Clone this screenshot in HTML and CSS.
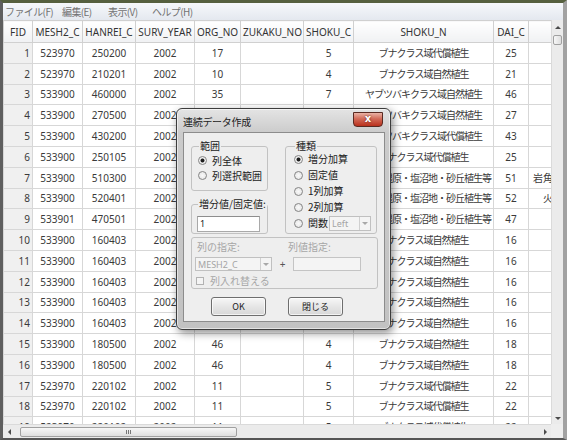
FILE: index.html
```html
<!DOCTYPE html>
<html lang="ja">
<head>
    <meta charset="UTF-8">
    <title>属性テーブル - 連続データ作成</title>
    <link rel="stylesheet" href="styles.css">
</head>
<body>
    <div class="window">
        <div class="menubar">
            <span class="menu m-file">ファイル(F)</span>
            <span class="menu m-edit">編集(E)</span>
            <span class="menu m-view">表示(V)</span>
            <span class="menu">ヘルプ(H)</span>
        </div>

        <div class="view">
            <div class="sheet">
                <table class="grid">
                    <colgroup>
                        <col class="w-fid">
                        <col class="w-mesh">
                        <col class="w-hanrei">
                        <col class="w-year">
                        <col class="w-org">
                        <col class="w-zukaku">
                        <col class="w-shokuc">
                        <col class="w-shokun">
                        <col class="w-dai">
                        <col class="w-more">
                    </colgroup>
                    <thead>
                    <tr>
                        <th>FID</th><th>MESH2_C</th><th>HANREI_C</th><th>SURV_YEAR</th><th>ORG_NO</th>
                        <th>ZUKAKU_NO</th><th>SHOKU_C</th><th>SHOKU_N</th><th>DAI_C</th><th></th>
                    </tr>
                    </thead>
                    <tbody>
                    <tr><td class="fid">1</td><td>523970</td><td>250200</td><td>2002</td><td>17</td><td></td><td>5</td><td>ブナクラス域代償植生</td><td>25</td><td></td></tr>
                    <tr><td class="fid">2</td><td>523970</td><td>210201</td><td>2002</td><td>10</td><td></td><td>4</td><td>ブナクラス域自然植生</td><td>21</td><td></td></tr>
                    <tr><td class="fid">3</td><td>533900</td><td>460000</td><td>2002</td><td>35</td><td></td><td>7</td><td>ヤブツバキクラス域自然植生</td><td>46</td><td></td></tr>
                    <tr><td class="fid">4</td><td>533900</td><td>270500</td><td>2002</td><td>35</td><td></td><td>7</td><td>ヤブツバキクラス域自然植生</td><td>27</td><td></td></tr>
                    <tr><td class="fid">5</td><td>533900</td><td>430200</td><td>2002</td><td>35</td><td></td><td>8</td><td>ヤブツバキクラス域代償植生</td><td>43</td><td></td></tr>
                    <tr><td class="fid">6</td><td>533900</td><td>250105</td><td>2002</td><td>35</td><td></td><td>5</td><td>ブナクラス域代償植生</td><td>25</td><td></td></tr>
                    <tr><td class="fid">7</td><td>533900</td><td>510300</td><td>2002</td><td>36</td><td></td><td>10</td><td>河辺・湿原・塩沼地・砂丘植生等</td><td>51</td><td class="ext-a">岩角地植生</td></tr>
                    <tr><td class="fid">8</td><td>533900</td><td>520401</td><td>2002</td><td>36</td><td></td><td>10</td><td>河辺・湿原・塩沼地・砂丘植生等</td><td>52</td><td class="ext-b">火山荒原植生</td></tr>
                    <tr><td class="fid">9</td><td>533901</td><td>470501</td><td>2002</td><td>36</td><td></td><td>10</td><td>河辺・湿原・塩沼地・砂丘植生等</td><td>47</td><td></td></tr>
                    <tr><td class="fid">10</td><td>533900</td><td>160403</td><td>2002</td><td>46</td><td></td><td>4</td><td>ブナクラス域自然植生</td><td>16</td><td></td></tr>
                    <tr><td class="fid">11</td><td>533900</td><td>160403</td><td>2002</td><td>46</td><td></td><td>4</td><td>ブナクラス域自然植生</td><td>16</td><td></td></tr>
                    <tr><td class="fid">12</td><td>533900</td><td>160403</td><td>2002</td><td>46</td><td></td><td>4</td><td>ブナクラス域自然植生</td><td>16</td><td></td></tr>
                    <tr><td class="fid">13</td><td>533900</td><td>160403</td><td>2002</td><td>46</td><td></td><td>4</td><td>ブナクラス域自然植生</td><td>16</td><td></td></tr>
                    <tr><td class="fid">14</td><td>533900</td><td>160403</td><td>2002</td><td>46</td><td></td><td>4</td><td>ブナクラス域自然植生</td><td>16</td><td></td></tr>
                    <tr><td class="fid">15</td><td>533900</td><td>180500</td><td>2002</td><td>46</td><td></td><td>4</td><td>ブナクラス域自然植生</td><td>18</td><td></td></tr>
                    <tr><td class="fid">16</td><td>533900</td><td>180500</td><td>2002</td><td>46</td><td></td><td>4</td><td>ブナクラス域自然植生</td><td>18</td><td></td></tr>
                    <tr><td class="fid">17</td><td>523970</td><td>220102</td><td>2002</td><td>11</td><td></td><td>5</td><td>ブナクラス域代償植生</td><td>22</td><td></td></tr>
                    <tr><td class="fid">18</td><td>523970</td><td>220102</td><td>2002</td><td>11</td><td></td><td>5</td><td>ブナクラス域代償植生</td><td>22</td><td></td></tr>
                    <tr><td class="fid">19</td><td>523970</td><td>220102</td><td>2002</td><td>11</td><td></td><td>5</td><td>ブナクラス域代償植生</td><td>22</td><td></td></tr>
                    </tbody>
                </table>
            </div>
            <!-- 縦スクロールバー -->
            <div class="vscroll">
                <div class="arrow"><span class="tri up"></span></div>
                <div class="vthumb"></div>
                <div class="arrow bottom"><span class="tri down"></span></div>
            </div>
        </div>

        <!-- 横スクロールバー -->
        <div class="hbar">
            <div class="hscroll">
                <div class="harrow"><span class="tri left"></span></div>
                <div class="hthumb"><span class="grip"></span></div>
                <div class="harrow end"><span class="tri right"></span></div>
            </div>
            <div class="corner"></div>
        </div>
    </div>

    <!-- 連続データ作成ダイアログ -->
    <div class="dialog">
        <div class="titlebar">
            <span class="title">連続データ作成</span>
            <span class="close">x</span>
        </div>
        <div class="client">
            <div class="top">
                <div class="left">
                    <fieldset class="group g-range">
                        <legend>範囲</legend>
                        <div class="opt"><span class="radio on"></span>列全体</div>
                        <div class="opt"><span class="radio"></span>列選択範囲</div>
                    </fieldset>
                    <fieldset class="group g-step">
                        <legend>増分値/固定値:</legend>
                        <div class="edit">1</div>
                    </fieldset>
                </div>
                <fieldset class="group g-kind">
                    <legend>種類</legend>
                    <div class="opt"><span class="radio on"></span>増分加算</div>
                    <div class="opt"><span class="radio"></span>固定値</div>
                    <div class="opt"><span class="radio"></span>1列加算</div>
                    <div class="opt"><span class="radio"></span>2列加算</div>
                    <div class="opt"><span class="radio"></span>関数<span class="combo small">Left<span class="drop"><span class="tri down"></span></span></span></div>
                </fieldset>
            </div>

            <div class="g-col">
                <div class="labels">
                    <span class="lbl-col">列の指定:</span>
                    <span>列値指定:</span>
                </div>
                <div class="fields">
                    <span class="combo wide">MESH2_C<span class="drop"><span class="tri down"></span></span></span>
                    <span class="plus">+</span>
                    <span class="edit off"></span>
                </div>
                <div class="opt check-row"><span class="check"></span>列入れ替える</div>
            </div>

            <div class="buttons">
                <span class="btn">OK</span>
                <span class="btn">閉じる</span>
            </div>
        </div>
    </div>
</body>
</html>
```

FILE: styles.css
```css
* {
    box-sizing: border-box;
}
body {
    margin: 0;
    width: 567px;
    height: 440px;
    overflow: hidden;
    position: relative;
    background: #5e5e5e;
    font-family: "Noto Sans", "Noto Sans CJK JP", sans-serif;
    font-size: 10px;
    color: #3a3a3a;
}

/* ウィンドウ枠 */
.window {
    height: 440px;
    display: flex;
    flex-direction: column;
    border-top: 3px solid #56603f;
    border-left: 3px solid #5f5f5f;
    border-right: 4px solid #a2a2a2;
    border-bottom: 2px solid #555555;
}

.menubar {
    height: 17px;
    display: flex;
    align-items: center;
    padding-left: 2px;
    background: linear-gradient(#f6f8fb, #e4e8ef);
    font-family: "Noto Sans CJK JP", sans-serif;
    font-size: 10px;
    line-height: 12px;
    letter-spacing: -0.6px;
    color: #727272;
}
.menubar .m-file {
    width: 57px;
}
.menubar .m-edit {
    width: 46px;
}
.menubar .m-view {
    width: 44px;
}

.view {
    flex: 1;
    display: flex;
    min-height: 0;
}
.sheet {
    flex: 1;
    overflow: hidden;
    background: #ffffff;
}

/* 属性テーブル */
.grid {
    border-collapse: collapse;
    table-layout: fixed;
    width: 615px;
}
.grid .w-fid { width: 29px; }
.grid .w-mesh { width: 50px; }
.grid .w-hanrei { width: 53px; }
.grid .w-year { width: 59px; }
.grid .w-org { width: 46px; }
.grid .w-zukaku { width: 63px; }
.grid .w-shokuc { width: 50px; }
.grid .w-shokun { width: 140px; }
.grid .w-dai { width: 35px; }
.grid .w-more { width: 90px; }

.grid th,
.grid td {
    border: 1px solid #d7d7d7;
    padding: 0 2px;
    overflow: hidden;
    white-space: nowrap;
    text-align: center;
    font-weight: normal;
    line-height: 12px;
}
.grid thead tr {
    height: 22px;
}
.grid thead th {
    background: linear-gradient(#ffffff, #f0f1f3);
    color: #333333;
    border-color: #d0d0d0;
}
.grid tbody tr {
    height: 20.8px;
}
.grid td.fid {
    background: #f0f0f0;
    text-align: right;
    padding-right: 2px;
}
.grid td:nth-child(8) {
    letter-spacing: -1px;
}
.grid td:nth-child(10) {
    text-align: left;
}
.grid td.ext-a {
    padding-left: 4px;
}
.grid td.ext-b {
    padding-left: 14px;
}

/* スクロールバー */
.vscroll {
    width: 12px;
    display: flex;
    flex-direction: column;
    background: #ebebeb;
    border-left: 1px solid #dadada;
}
.vscroll .arrow {
    height: 14px;
    display: flex;
    align-items: center;
    justify-content: center;
}
.vscroll .bottom {
    margin-top: auto;
    height: 12px;
}
.vthumb {
    height: 10px;
    margin: 1px 1px 0;
    border: 1px solid #a0a0a0;
    border-radius: 2px;
    background: linear-gradient(90deg, #f7f7f7, #dedede);
}
.hbar {
    height: 14px;
    display: flex;
}
.hscroll {
    flex: 1;
    display: flex;
    align-items: center;
    background: #ebebeb;
    border-top: 1px solid #dadada;
}
.harrow {
    width: 12px;
    height: 12px;
    display: flex;
    align-items: center;
    justify-content: center;
}
.harrow.end {
    margin-left: auto;
}
.hthumb {
    width: 217px;
    height: 10px;
    margin-left: 5px;
    border: 1px solid #a0a0a0;
    border-radius: 2px;
    background: linear-gradient(#f7f7f7, #dedede);
    display: flex;
    align-items: center;
    justify-content: center;
}
.hthumb .grip {
    width: 5px;
    height: 4px;
    background: repeating-linear-gradient(90deg, #777777 0 1px, transparent 1px 2px);
}
.corner {
    width: 12px;
    background: #eeeeee;
}

.tri {
    width: 0;
    height: 0;
    border: 3px solid transparent;
}
.tri.up {
    border-top-width: 0;
    border-bottom-color: #4a4a4a;
}
.tri.down {
    border-bottom-width: 0;
    border-top-color: #4a4a4a;
}
.tri.left {
    border-left-width: 0;
    border-right-color: #4a4a4a;
}
.tri.right {
    border-right-width: 0;
    border-left-color: #4a4a4a;
}

/* ダイアログ */
.dialog {
    position: absolute;
    left: 176px;
    top: 108px;
    width: 215px;
    height: 222px;
    display: flex;
    flex-direction: column;
    padding: 0 5px 7px 6px;
    border: 1px solid #3c3c3c;
    border-radius: 6px;
    background: linear-gradient(#e4e4e4, #cbcbcb 24px, #c2c2c2);
    box-shadow: 2px 3px 8px rgba(0,0,0,.45), inset 0 0 0 1px rgba(255,255,255,.55);
    font-family: "Noto Sans CJK JP", sans-serif;
    font-size: 10px;
    line-height: 12px;
    color: #222222;
}
.dialog .titlebar {
    height: 23px;
    display: flex;
    justify-content: space-between;
    align-items: flex-start;
}
.dialog .title {
    margin-top: 7px;
    letter-spacing: -0.3px;
}
.dialog .close {
    width: 30px;
    height: 15px;
    margin-top: 3px;
    margin-right: 2px;
    border: 1px solid #5a2a22;
    border-radius: 0 0 4px 4px;
    background: linear-gradient(#eab3a6, #d26a58 45%, #b9301c);
    color: #ffffff;
    font-family: "DejaVu Sans", sans-serif;
    font-weight: bold;
    font-size: 10px;
    line-height: 12px;
    text-align: center;
    text-shadow: 0 0 2px #5a1a10;
}
.dialog .client {
    height: 190px;
    border: 1px solid #8c8c8c;
    background: #eeeeee;
    padding: 8px 6px 0 7px;
}
.dialog .top {
    display: flex;
    gap: 17px;
}
.dialog .left {
    width: 77px;
    display: flex;
    flex-direction: column;
    gap: 8px;
}
.dialog .group {
    margin: 0;
    padding: 0;
    min-width: 0;
    border: 1px solid #c2c2c2;
    border-radius: 3px;
}
.dialog legend {
    padding: 0 1px;
    margin-left: 1px;
    line-height: 10px;
    font-size: 10px;
}
.dialog .opt {
    display: flex;
    align-items: center;
    gap: 5px;
    white-space: nowrap;
}
.dialog .g-range {
    padding: 2px 0 7px 6px;
}
.dialog .g-range .opt {
    height: 15px;
}
.dialog .g-step {
    padding: 7px 0 1px 5px;
}
.dialog .g-kind {
    width: 92px;
    padding: 0 0 2px 8px;
}
.dialog .g-kind .opt {
    height: 16px;
}
.dialog .radio {
    width: 9px;
    height: 9px;
    flex: none;
    border: 1px solid #858585;
    border-radius: 50%;
    background: radial-gradient(circle, #f9f9f9 0, #e2e2e2 100%);
}
.dialog .radio.on {
    background: radial-gradient(circle, #1e1e1e 0 1.6px, #f6f6f6 2.4px, #e2e2e2 100%);
}
.dialog .edit {
    width: 63px;
    height: 16px;
    border: 1px solid #a9a9a9;
    border-top-color: #8e8e8e;
    background: #ffffff;
    padding-left: 2px;
    line-height: 14px;
    font-family: "Noto Sans", sans-serif;
    font-size: 9px;
}
.dialog .combo {
    display: flex;
    align-items: center;
    justify-content: space-between;
    height: 15px;
    border: 1px solid #c0c0c0;
    background: #f4f4f4;
    color: #a4a4a4;
    padding-left: 2px;
    font-family: "Noto Sans", sans-serif;
    font-size: 9px;
    line-height: 11px;
}
.dialog .combo .drop {
    width: 11px;
    height: 100%;
    border-left: 1px solid #d0d0d0;
    display: flex;
    align-items: center;
    justify-content: center;
}
.dialog .combo .tri.down {
    border-top-color: #a8a8a8;
}
.dialog .combo.small {
    width: 42px;
    margin-left: -4px;
}
.dialog .combo.wide {
    width: 77px;
    height: 14px;
    margin-left: 3px;
}

/* 無効になっているグループ */
.dialog .g-col {
    height: 52px;
    margin-top: 3px;
    border: 1px solid #c2c2c2;
    border-radius: 3px;
    padding-top: 3px;
    color: #a6a6a6;
}
.dialog .labels {
    display: flex;
}
.dialog .labels .lbl-col {
    width: 96px;
    padding-left: 5px;
}
.dialog .fields {
    display: flex;
    align-items: center;
    margin-top: 4px;
}
.dialog .plus {
    width: 21px;
    text-align: center;
    color: #555555;
    font-family: "Noto Sans", sans-serif;
}
.dialog .edit.off {
    width: 68px;
    height: 14px;
    border-color: #c4c4c4;
    background: #f4f4f4;
}
.dialog .check-row {
    height: 15px;
    margin-top: 2px;
    padding-left: 4px;
    gap: 6px;
}
.dialog .check {
    width: 8px;
    height: 8px;
    border: 1px solid #b2b2b2;
    background: #f4f4f4;
}

.dialog .buttons {
    display: flex;
    gap: 22px;
    margin-top: 8px;
    padding-left: 20px;
}
.dialog .btn {
    width: 55px;
    height: 19px;
    border: 1px solid #6e6e6e;
    border-radius: 3px;
    background: linear-gradient(#f7f7f7, #e6e6e6 50%, #d7d7d7);
    box-shadow: inset 0 0 0 1px rgba(255,255,255,.7);
    text-align: center;
    line-height: 17px;
    font-size: 9px;
}
```
